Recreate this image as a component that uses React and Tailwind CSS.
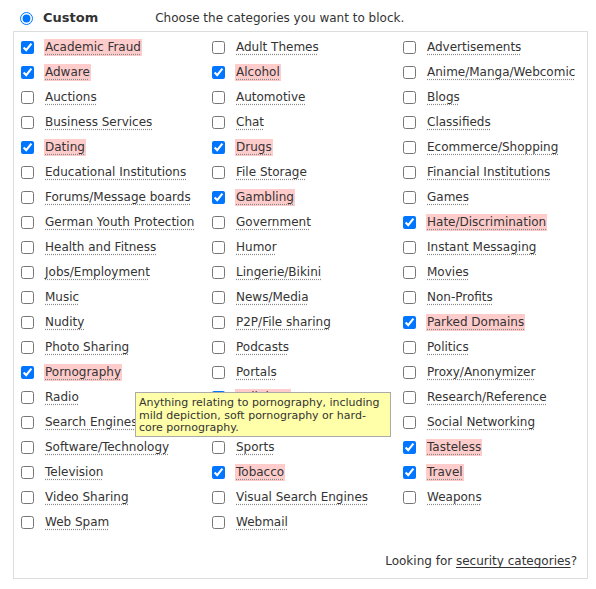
const categories = [
  ["Academic Fraud", true], ["Adult Themes", false], ["Advertisements", false],
  ["Adware", true], ["Alcohol", true], ["Anime/Manga/Webcomic", false],
  ["Auctions", false], ["Automotive", false], ["Blogs", false],
  ["Business Services", false], ["Chat", false], ["Classifieds", false],
  ["Dating", true], ["Drugs", true], ["Ecommerce/Shopping", false],
  ["Educational Institutions", false], ["File Storage", false], ["Financial Institutions", false],
  ["Forums/Message boards", false], ["Gambling", true], ["Games", false],
  ["German Youth Protection", false], ["Government", false], ["Hate/Discrimination", true],
  ["Health and Fitness", false], ["Humor", false], ["Instant Messaging", false],
  ["Jobs/Employment", false], ["Lingerie/Bikini", false], ["Movies", false],
  ["Music", false], ["News/Media", false], ["Non-Profits", false],
  ["Nudity", false], ["P2P/File sharing", false], ["Parked Domains", true],
  ["Photo Sharing", false], ["Podcasts", false], ["Politics", false],
  ["Pornography", true], ["Portals", false], ["Proxy/Anonymizer", false],
  ["Radio", false], ["Religious", true], ["Research/Reference", false],
  ["Search Engines", false], ["Sexuality", true], ["Social Networking", false],
  ["Software/Technology", false], ["Sports", false], ["Tasteless", true],
  ["Television", false], ["Tobacco", true], ["Travel", true],
  ["Video Sharing", false], ["Visual Search Engines", false], ["Weapons", false],
  ["Web Spam", false], ["Webmail", false],
];

function Category({ name, checked }) {
  return (
    <label className="flex items-center h-[25px]">
      <input type="checkbox" defaultChecked={checked} className="m-0 w-[13px] h-[13px] shrink-0" />
      <span
        className={`ml-[10px] px-px leading-[17px] underline decoration-dotted decoration-[#888] underline-offset-[3px] ${checked ? "bg-[#ffcccc]" : ""}`}
      >
        {name}
      </span>
    </label>
  );
}

export default function App() {
  return (
    <div
      className="relative w-[596px] h-[589px] bg-white text-[12px] text-[#333]"
      style={{ fontFamily: '"DejaVu Sans", Verdana, sans-serif' }}
    >
      {/* header */}
      <div className="flex items-center h-[31px] pl-[20px] pt-[5px]">
        <input type="radio" defaultChecked className="m-0 w-[13px] h-[13px]" />
        <span className="ml-[10px] font-bold text-[13px]">Custom</span>
        <span className="ml-[57px]">Choose the categories you want to block.</span>
      </div>

      {/* category box */}
      <div className="ml-[13px] w-[575px] h-[548px] border border-[#ddd] flex flex-col">
        <div className="grid grid-cols-[191px_191px_1fr] pl-[7px] pt-[3px]">
          {categories.map(([name, checked]) => (
            <Category key={name} name={name} checked={checked} />
          ))}
        </div>
        <div className="mt-auto mb-[8px] pr-[10px] text-right">
          Looking for <span className="underline underline-offset-2">security categories</span>?
        </div>
      </div>

      {/* tooltip */}
      <div className="absolute left-[135px] top-[392px] w-[256px] h-[45px] bg-[#ffffaa] border border-[#aaa] px-[3px] pt-[4px] text-[11px] leading-[12.5px] text-[#333]">
        Anything relating to pornography, including mild depiction, soft pornography or hard-core pornography.
      </div>
    </div>
  );
}
